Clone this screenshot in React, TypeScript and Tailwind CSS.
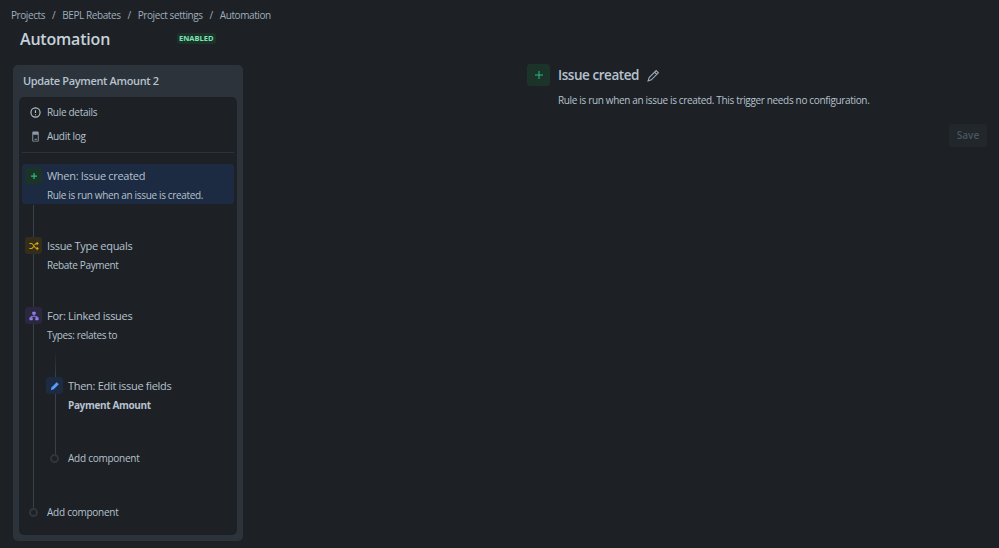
import React from "react";

const font = { fontFamily: '"Open Sans", "Noto Sans", sans-serif' };

function Shuffle() {
  return (
    <svg width="10" height="10" viewBox="0 0 24 24" fill="none" stroke="#d9a90a" strokeWidth="2.500" strokeLinecap="round" strokeLinejoin="round">
      <path d="M2 6h4c5 0 7 12 12 12h4M2 18h4c2 0 3.500-2 4.500-4M14 9c1-1.500 2-3 4-3h4M19 3l3 3-3 3M19 15l3 3-3 3" />
    </svg>
  );
}
function Branch() {
  return (
    <svg width="10" height="10" viewBox="0 0 24 24" fill="#8f7ee7">
      <rect x="8" y="2" width="8" height="7" rx="1" />
      <rect x="1" y="15" width="8" height="7" rx="1" />
      <rect x="15" y="15" width="8" height="7" rx="1" />
      <path d="M11 9h2v3h6a1 1 0 0 1 1 1v3h-2v-2H6v2H4v-3a1 1 0 0 1 1-1h6z" />
    </svg>
  );
}
function Pen({ size = 10, color = "#579dff" }: { size?: number; color?: string }) {
  return (
    <svg width={size} height={size} viewBox="0 0 24 24" fill={color}>
      <path d="M16 3l5 5L9 20l-7 2 2-7z" />
    </svg>
  );
}
function Plus({ size = 9, color = "#2abb7f", w = 2.500 }: { size?: number; color?: string; w?: number }) {
  return (
    <svg width={size} height={size} viewBox="0 0 12 12" stroke={color} strokeWidth={w} fill="none">
      <path d="M6 0v12M0 6h12" />
    </svg>
  );
}

function Step({ icon, bg, title, sub, bold }: { icon: React.ReactNode; bg: string; title: string; sub: string; bold?: boolean }) {
  return (
    <div className="relative flex h-[70px] items-start gap-[5px]">
      <div className={`flex h-[17px] w-[17px] shrink-0 items-center justify-center rounded-[3px] ${bg}`}>{icon}</div>
      <div>
        <div className="text-[11px] leading-[18px] tracking-[-0.3px] text-[#b6c2cf]">{title}</div>
        <div className={`mt-px text-[10px] leading-[18px] tracking-[-0.35px] text-[#b6c2cf] ${bold ? "font-bold" : ""}`}>{sub}</div>
      </div>
    </div>
  );
}

function AddRow() {
  return (
    <div className="flex items-center gap-[9px]">
      <div className="ml-1 h-[9px] w-[9px] rounded-full border-2 border-[#2f363d] bg-[#1d2125]" />
      <div className="text-[10px] leading-[18px] tracking-[-0.25px] text-[#b6c2cf]">Add component</div>
    </div>
  );
}

export default function App() {
  return (
    <div className="flex h-[548px] w-[999px] flex-col overflow-hidden bg-[#1d2125] text-[#b6c2cf]" style={font}>
      <div className="flex gap-[7px] pl-[11px] pt-[7px] text-[10px] leading-[16px] tracking-[-0.42px] text-[#9fadbc]">
        <span>Projects</span><span>/</span><span>BEPL Rebates</span><span>/</span><span>Project settings</span><span>/</span><span>Automation</span>
      </div>
      <div className="flex h-[29px] items-center pl-5 pt-[2px]">
        <div className="w-[157px] text-[16px] font-semibold leading-[26px] tracking-[-0.2px] text-[#c7d1db]">Automation</div>
        <div className="rounded-[3px] bg-[#1c3329] px-[2px] text-[7.5px] font-bold leading-[11px] text-[#7ee2b8]">ENABLED</div>
      </div>
      <div className="flex flex-1 pl-[13px] pt-[13px]">
        <div className="h-[476px] w-[230px] rounded-[5px] bg-[#2c333a] px-[6px] pb-[6px]">
          <div className="flex h-[32px] items-center pl-1 pt-[1px] text-[11px] font-semibold tracking-[-0.35px] text-[#b6c2cf]">Update Payment Amount 2</div>
          <div className="relative h-[438px] rounded-[5px] bg-[#1d2125] px-[3px]">
            <div className="absolute left-[14px] top-[108px] h-[307px] w-px bg-[#38414a]" />
            <div className="absolute left-[36px] top-[253px] h-[108px] w-px bg-linear-to-b from-transparent from-0% to-[#38414a] to-25%" />
            <div className="flex h-[56px] flex-col border-b border-[#2c333a] pt-[3px]">
              <div className="flex h-[24px] items-center gap-[6px] pl-[8px]">
                <svg width="11" height="11" viewBox="0 0 24 24" fill="none" stroke="#b6c2cf" strokeWidth="2.500">
                  <circle cx="12" cy="12" r="10" /><path d="M12 7v6M12 16v2" />
                </svg>
                <span className="text-[10px] tracking-[-0.3px]">Rule details</span>
              </div>
              <div className="flex h-[24px] items-center gap-[6px] pl-[8px]">
                <svg width="11" height="11" viewBox="0 0 24 24" fill="#8c9bab">
                  <path d="M7 1h10a2 2 0 0 1 2 2v18a2 2 0 0 1-2 2H7a2 2 0 0 1-2-2V3a2 2 0 0 1 2-2zm0 7v13h10V8zm3 9h5v2h-5z" fillRule="evenodd" />
                </svg>
                <span className="text-[10px] tracking-[-0.3px]">Audit log</span>
              </div>
            </div>
            <div className="relative mt-[11px] h-[40px] rounded-[3px] bg-[#1c2b41] pl-[3px] pt-[3px]">
              <div className="flex items-start gap-[5px]">
                <div className="flex h-[17px] w-[17px] shrink-0 items-center justify-center rounded-[3px] bg-[#1c3329]"><Plus size={6} /></div>
                <div>
                  <div className="text-[11px] leading-[18px] tracking-[-0.3px] text-[#b6c2cf]">When: Issue created</div>
                  <div className="mt-px text-[10px] leading-[18px] tracking-[-0.34px] text-[#b6c2cf]">Rule is run when an issue is created.</div>
                </div>
              </div>
            </div>
            <div className="relative pl-[3px] pt-[33px]">
              <Step icon={<Shuffle />} bg="bg-[#332e1b]" title="Issue Type equals" sub="Rebate Payment" />
              <Step icon={<Branch />} bg="bg-[#2b273f]" title="For: Linked issues" sub="Types: relates to" />
              <div className="pl-[21px]">
                <Step icon={<Pen />} bg="bg-[#1c2b41]" title="Then: Edit issue fields" sub="Payment Amount" bold />
                <div className="mt-[2px]"><AddRow /></div>
              </div>
              <div className="mt-[36px]"><AddRow /></div>
            </div>
          </div>
        </div>
        <div className="ml-[284px] flex-1 -mt-[1px]">
          <div className="flex items-center gap-2">
            <div className="flex h-[22px] w-[23px] items-center justify-center rounded-[3px] bg-[#1c3329]"><Plus size={8} w={1.500} /></div>
            <span className="text-[13.500px] font-semibold tracking-[-0.45px] text-[#b6c2cf]">Issue created</span>
            <svg width="13" height="13" viewBox="0 0 24 24" fill="none" stroke="#9fadbc" strokeWidth="2">
              <path d="M17 3l4 4L8 20l-6 2 2-6z" /><path d="M14 6l4 4" />
            </svg>
          </div>
          <div className="ml-[31px] mt-[6px] text-[10px] leading-[16px] tracking-[-0.34px] text-[#b6c2cf]">Rule is run when an issue is created. This trigger needs no configuration.</div>
          <div className="mr-3 mt-[16px] flex justify-end">
            <div className="flex h-[23px] w-[38px] items-center justify-center rounded-[3px] bg-[#22272b] text-[10px] font-semibold text-[#4b555f]">Save</div>
          </div>
        </div>
      </div>
    </div>
  );
}
